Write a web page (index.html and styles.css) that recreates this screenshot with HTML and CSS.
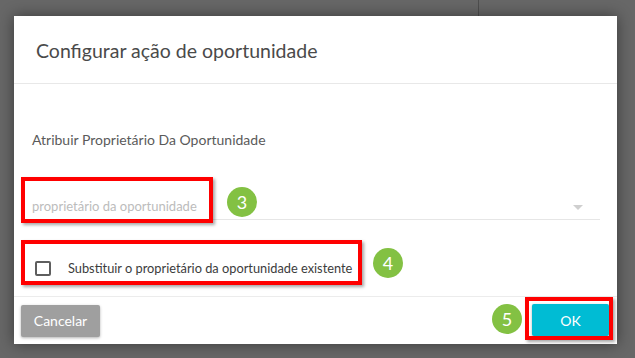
FILE: index.html
```html
<!DOCTYPE html>
<html lang="pt">
<head>
<meta charset="utf-8">
<title>Configurar ação de oportunidade</title>
<link rel="stylesheet" href="styles.css">
</head>
<body>
<div class="backdrop">
  <div class="bg-strip"><div class="bg-line"></div></div>
  <div class="dialog">
    <div class="dialog-header">
      <h1 class="dialog-title">Configurar ação de oportunidade</h1>
    </div>
    <div class="dialog-body">
      <div class="field-label">Atribuir Proprietário Da Oportunidade</div>
      <div class="select-field">
        <span class="placeholder">proprietário da oportunidade</span>
        <span class="caret"></span>
      </div>
      <label class="check-row">
        <span class="checkbox"></span>
        <span class="check-label">Substituir o proprietário da oportunidade existente</span>
      </label>
    </div>
    <div class="dialog-footer">
      <button class="btn btn-cancel">Cancelar</button>
      <button class="btn btn-ok">OK</button>
    </div>

    <div class="mark mark-field"></div>
    <div class="mark mark-check"></div>
    <div class="mark mark-ok"></div>
    <div class="step step-3">3</div>
    <div class="step step-4">4</div>
    <div class="step step-5">5</div>
  </div>
</div>
</body>
</html>
```
FILE: styles.css
```css
html, body {
  margin: 0;
  padding: 0;
}
body {
  background: #676767;
  font-family: Lato, "Open Sans", Arial, sans-serif;
  width: 635px;
  height: 358px;
  overflow: hidden;
}
.backdrop {
  width: 635px;
  height: 358px;
}
.bg-strip {
  height: 16px;
  display: flex;
}
.bg-line {
  margin-left: 478px;
  width: 1px;
  background: #4e4e4e;
}
.dialog {
  position: relative;
  margin-left: 14px;
  width: 603px;
  height: 328px;
  background: #fff;
  display: flex;
  flex-direction: column;
  box-shadow: 0 0 14px rgba(0, 0, 0, 0.45);
}
.dialog-header {
  height: 68px;
  border-bottom: 1px solid #e8e8e8;
  display: flex;
  align-items: center;
  padding-left: 22px;
  box-sizing: border-box;
}
.dialog-title {
  margin: 0;
  font-weight: 400;
  font-size: 19.5px;
  color: #4a4a4a;
  line-height: 24px;
  margin-top: 2px;
}
.dialog-body {
  flex: 1;
  padding-left: 17px;
  padding-right: 17px;
}
.field-label {
  margin-top: 47px;
  margin-left: 1px;
  font-size: 14px;
  line-height: 17px;
  color: #5a5a5a;
}
.select-field {
  margin-top: 45px;
  height: 27px;
  border-bottom: 1px solid #e6e6e6;
  display: flex;
  align-items: center;
  justify-content: space-between;
  box-sizing: border-box;
}
.placeholder {
  margin-left: 1px;
  font-size: 13px;
  color: #bcbcbc;
}
.caret {
  width: 0;
  height: 0;
  border-left: 5px solid transparent;
  border-right: 5px solid transparent;
  border-top: 5px solid #cfcfcf;
  margin-right: 17px;
  margin-top: 3px;
}
.check-row {
  margin-top: 40px;
  display: flex;
  align-items: center;
  gap: 17px;
  padding-left: 4px;
}
.checkbox {
  width: 16px;
  height: 15px;
  border: 2px solid #5e5e5e;
  border-radius: 2px;
  box-sizing: border-box;
}
.check-label {
  font-size: 12.8px;
  color: #3c3c3c;
}
.dialog-footer {
  height: 48px;
  border-top: 1px solid #ececec;
  display: flex;
  align-items: center;
  justify-content: space-between;
  padding: 0 8px 0 7px;
  box-sizing: border-box;
}
.btn {
  height: 32px;
  border: none;
  border-radius: 2px;
  font-family: Lato, "Open Sans", Arial, sans-serif;
  font-size: 14px;
  color: #fff;
  padding: 0;
  box-shadow: 0 1px 3px rgba(0, 0, 0, 0.3);
}
.btn-cancel {
  width: 79px;
  background: #9f9f9f;
}
.btn-ok {
  width: 77px;
  background: #00bcd4;
  margin-top: -1px;
}

/* annotation overlays */
.mark {
  position: absolute;
  border: 4px solid #ff0000;
  box-sizing: border-box;
  box-shadow: 2px 2px 3px rgba(0, 0, 0, 0.35);
}
.mark-field {
  left: 7px;
  top: 161px;
  width: 192px;
  height: 46px;
}
.mark-check {
  left: 7px;
  top: 224px;
  width: 341px;
  height: 45px;
}
.mark-ok {
  left: 511px;
  top: 281px;
  width: 88px;
  height: 43px;
}
.step {
  position: absolute;
  width: 30px;
  height: 30px;
  border-radius: 50%;
  background: #83c143;
  color: #fff;
  font-size: 18px;
  line-height: 30px;
  text-align: center;
}
.step-3 { left: 213px; top: 171px; }
.step-4 { left: 359px; top: 232px; }
.step-5 { left: 478px; top: 288px; }
```
